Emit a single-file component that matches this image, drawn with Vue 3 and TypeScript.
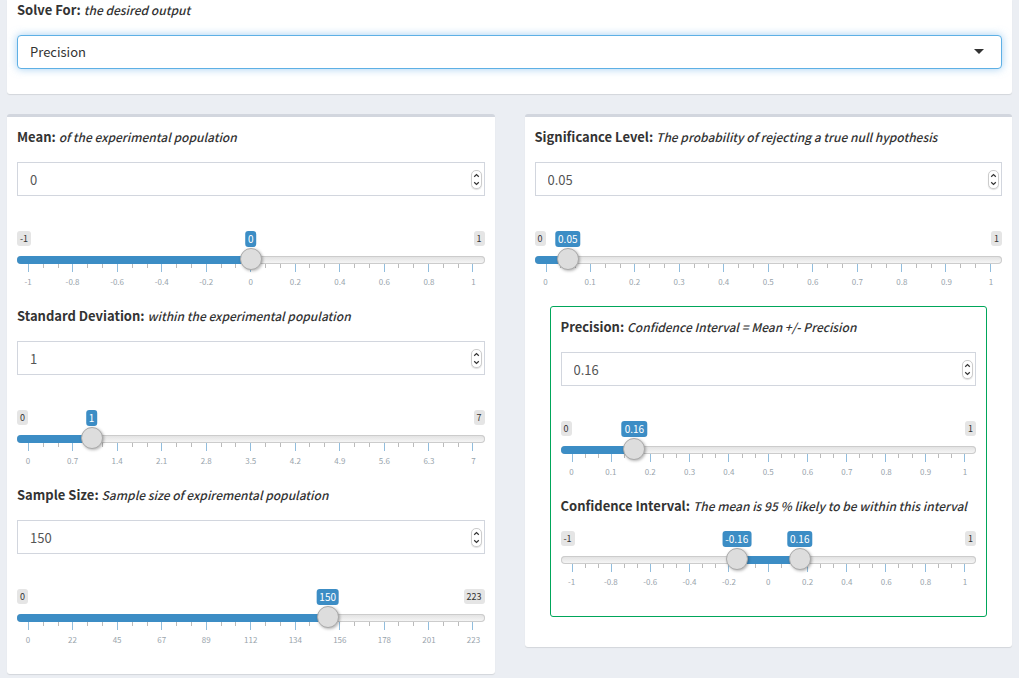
<script setup lang="ts">
import { reactive, ref } from 'vue'

interface Field {
  id: string
  title: string
  note: string
  min: number
  max: number
  step: number
  values: number[]
  ticks: string[]
  numeric: boolean
}

interface Section {
  outlined: boolean
  fields: Field[]
}

const symmetric = ['-1', '-0.8', '-0.6', '-0.4', '-0.2', '0', '0.2', '0.4', '0.6', '0.8', '1']
const unit = ['0', '0.1', '0.2', '0.3', '0.4', '0.5', '0.6', '0.7', '0.8', '0.9', '1']

const target = ref('Precision')

const cards = reactive<Section[][]>([
  [
    {
      outlined: false,
      fields: [
        { id: 'mean', title: 'Mean:', note: 'of the experimental population', min: -1, max: 1, step: 0.01, values: [0], ticks: symmetric, numeric: true },
        { id: 'sd', title: 'Standard Deviation:', note: 'within the experimental population', min: 0, max: 7, step: 0.01, values: [1], ticks: ['0', '0.7', '1.4', '2.1', '2.8', '3.5', '4.2', '4.9', '5.6', '6.3', '7'], numeric: true },
        { id: 'size', title: 'Sample Size:', note: 'Sample size of expiremental population', min: 0, max: 223, step: 1, values: [150], ticks: ['0', '22', '45', '67', '89', '112', '134', '156', '178', '201', '223'], numeric: true },
      ],
    },
  ],
  [
    {
      outlined: false,
      fields: [
        { id: 'alpha', title: 'Significance Level:', note: 'The probability of rejecting a true null hypothesis', min: 0, max: 1, step: 0.01, values: [0.05], ticks: unit, numeric: true },
      ],
    },
    {
      outlined: true,
      fields: [
        { id: 'precision', title: 'Precision:', note: 'Confidence Interval = Mean +/- Precision', min: 0, max: 1, step: 0.01, values: [0.16], ticks: unit, numeric: true },
        { id: 'interval', title: 'Confidence Interval:', note: 'The mean is 95 % likely to be within this interval', min: -1, max: 1, step: 0.01, values: [-0.16, 0.16], ticks: symmetric, numeric: false },
      ],
    },
  ],
])

// Thumb centres travel between half a thumb from each end of the track.
function place(f: Field, v: number): string {
  const r = (v - f.min) / (f.max - f.min)
  return `calc(11px + (100% - 22px) * ${r})`
}

function fill(f: Field) {
  const last = f.values[f.values.length - 1]
  if (f.values.length === 1) return { width: place(f, last) }
  const share = (last - f.values[0]) / (f.max - f.min)
  return { marginLeft: place(f, f.values[0]), width: `calc((100% - 22px) * ${share})` }
}

function nudge(f: Field, dir: number) {
  const next = Math.round((f.values[0] + dir * f.step) * 100) / 100
  f.values[0] = Math.min(f.max, Math.max(f.min, next))
}
</script>

<template>
  <main class="page">
    <section class="card card-top">
      <label class="caption" for="target"><b>Solve For:</b> <i>the desired output</i></label>
      <div class="control">
        <select id="target" v-model="target" class="select">
          <option>Precision</option>
          <option>Sample Size</option>
          <option>Significance Level</option>
        </select>
        <svg class="caret" width="10" height="5" viewBox="0 0 10 5" aria-hidden="true"><path d="M0 0h10L5 5z" fill="#333" /></svg>
      </div>
    </section>

    <div class="columns">
      <section v-for="(sections, c) in cards" :key="c" class="card card-lined">
        <div v-for="(s, k) in sections" :key="k" :class="{ outlined: s.outlined }">
          <div v-for="f in s.fields" :key="f.id" class="field">
            <label class="caption" :for="f.id"><b>{{ f.title }}</b> <i>{{ f.note }}</i></label>
            <div v-if="f.numeric" class="control number-control">
              <input :id="f.id" v-model.number="f.values[0]" class="number" type="number" :min="f.min" :max="f.max" :step="f.step">
              <span class="spinner">
                <button type="button" :aria-label="'Increase ' + f.id" @click="nudge(f, 1)">
                  <svg width="7" height="5" viewBox="0 0 7 5"><path d="M1.2 3.8 3.5 1.6 5.8 3.8" /></svg>
                </button>
                <button type="button" :aria-label="'Decrease ' + f.id" @click="nudge(f, -1)">
                  <svg width="7" height="5" viewBox="0 0 7 5"><path d="M1.2 1.2 3.5 3.4 5.8 1.2" /></svg>
                </button>
              </span>
            </div>
            <div class="slider">
              <div class="ends"><span>{{ f.min }}</span><span>{{ f.max }}</span></div>
              <output v-for="(v, n) in f.values" :key="n" class="badge" :style="{ left: place(f, v) }">{{ v }}</output>
              <div class="track"><div class="fill" :style="fill(f)" /></div>
              <input
                v-for="(v, n) in f.values"
                :id="f.numeric || n ? undefined : f.id"
                :key="'r' + n"
                v-model.number="f.values[n]"
                class="range"
                type="range"
                :min="f.min"
                :max="f.max"
                :step="f.step"
                :aria-label="f.title + ' ' + f.note"
              >
              <div class="marks"><span v-for="m in 31" :key="m" :class="{ major: m % 3 === 1 }" /></div>
              <div class="scale"><span v-for="t in f.ticks" :key="t">{{ t }}</span></div>
            </div>
          </div>
        </div>
      </section>
    </div>
  </main>
</template>

<style>
body {
  margin: 0;
  background: #ebeef3;
}
</style>

<style scoped>
* {
  box-sizing: border-box;
}
.page {
  padding: 0 7px 4px;
  color: #333;
  font: 13px/20px "Noto Sans CJK JP", "Noto Sans CJK SC", sans-serif;
}
.card {
  background: #fff;
  border-radius: 3px;
  box-shadow: 0 1px 1px rgba(0, 0, 0, 0.1);
  padding: 10px;
}
.card-top {
  border-radius: 0 0 3px 3px;
  padding: 0 10px 25px;
  margin-bottom: 20px;
}
.card-lined {
  flex: 1 1 0;
  min-width: 0;
  border-top: 3px solid #d2d6de;
}
.columns {
  display: flex;
  align-items: flex-start;
  gap: 30px;
}
.outlined {
  margin: 0 15px 20px;
  padding: 10px;
  border: 1px solid #00a65a;
  border-radius: 3px;
}
.caption {
  display: block;
  height: 20px;
  margin-bottom: 15px;
  white-space: nowrap;
}
.caption i {
  font-size: 12px;
  font-weight: 500;
}
.control {
  position: relative;
}
.number-control {
  margin-bottom: 35px;
}
.select,
.number {
  display: block;
  width: 100%;
  height: 34px;
  margin: 0;
  padding: 0 12px;
  background: #fff;
  font: inherit;
  outline: none;
  appearance: none;
}
.select {
  color: #333;
  border: 1px solid #5eb0e5;
  border-radius: 4px;
  box-shadow: 0 0 8px rgba(102, 175, 233, 0.6);
}
.caret {
  position: absolute;
  right: 18px;
  top: 14px;
}
.number {
  color: #555;
  border: 1px solid #d2d6de;
  border-radius: 0;
  appearance: textfield;
}
.number::-webkit-inner-spin-button {
  appearance: none;
}
.spinner {
  position: absolute;
  right: 3px;
  top: 8px;
  display: flex;
  flex-direction: column;
  width: 11px;
  height: 19px;
  border: 1px solid #ccc;
  border-radius: 5px;
  background: #fff;
  box-shadow: 0 1px 1px rgba(0, 0, 0, 0.12);
}
.spinner button {
  flex: 1;
  display: flex;
  align-items: center;
  justify-content: center;
  padding: 0;
  border: 0;
  background: none;
}
.spinner path {
  fill: none;
  stroke: #333;
  stroke-width: 1.2;
}
.slider {
  position: relative;
  height: 60px;
  margin-bottom: 15px;
}
.ends {
  display: flex;
  justify-content: space-between;
  height: 25px;
  align-items: flex-start;
}
.ends span {
  padding: 0 3px;
  border-radius: 3px;
  background: #e5e5e5;
  color: #333;
  font-size: 9px;
  line-height: 15px;
}
.badge {
  position: absolute;
  top: 0;
  padding: 0 3px;
  border-radius: 3px;
  background: #3c8dc5;
  color: #fff;
  font-size: 10px;
  line-height: 16px;
  transform: translateX(-50%);
}
.track {
  height: 8px;
  border-radius: 8px;
  overflow: hidden;
  background: linear-gradient(#e0e0e0, #f8f8f8);
  box-shadow: inset 0 0 0 1px #ccc;
}
.fill {
  height: 100%;
  background: #3c8dc5;
}
.range {
  position: absolute;
  left: 0;
  top: 17px;
  width: 100%;
  height: 22px;
  margin: 0;
  background: none;
  appearance: none;
  outline: none;
  pointer-events: none;
}
.range::-webkit-slider-thumb {
  appearance: none;
  width: 22px;
  height: 22px;
  border: 1px solid #aaa;
  border-radius: 50%;
  background: #ddd;
  box-shadow: 1px 1px 3px rgba(0, 0, 0, 0.3);
  pointer-events: auto;
}
.marks {
  display: flex;
  justify-content: space-between;
  height: 8px;
  padding: 0 11px;
}
.marks span {
  width: 1px;
  height: 4px;
  background: #bbb;
}
.marks .major {
  height: 8px;
  background: #91bddd;
}
.scale {
  display: flex;
  justify-content: space-between;
  padding: 0 11px;
  color: #99a4ac;
  font-size: 8px;
}
.scale span {
  display: flex;
  justify-content: center;
  width: 0;
  white-space: nowrap;
}
</style>
